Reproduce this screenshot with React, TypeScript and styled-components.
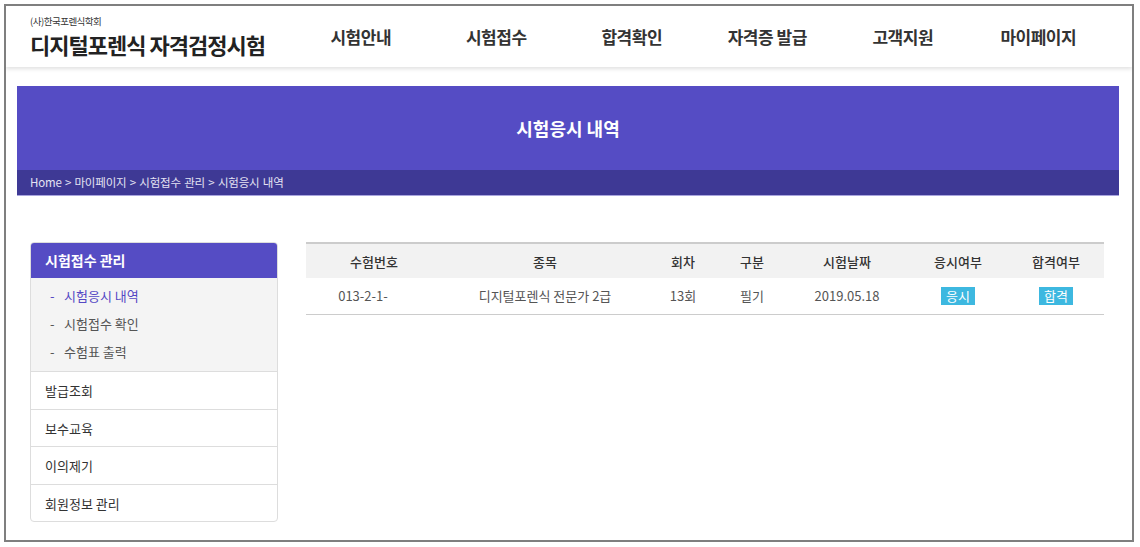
import React, { FC } from "react";
import styled, { createGlobalStyle } from "styled-components";

const GlobalStyle = createGlobalStyle`
  * { box-sizing: border-box; }
  body {
    margin: 0;
    background: #fff;
    font-family: "Noto Sans CJK KR", "Noto Sans", sans-serif;
    color: #333;
  }
`;

const Frame = styled.div`
  margin: 4px 0 0 4px;
  width: 1130px;
  height: 538px;
  border: 2px solid #7f7f7f;
  overflow: hidden;
`;

const Header = styled.header`
  display: flex;
  align-items: center;
  height: 61px;
  padding-left: 24px;
  box-shadow: 0 2px 4px rgba(0, 0, 0, 0.12);
  position: relative;
`;

const Logo = styled.div`
  display: flex;
  flex-direction: column;
  width: 263px;
  small {
    font-size: 9.5px;
    letter-spacing: -0.5px;
    color: #333;
    line-height: 14px;
  }
  strong {
    font-size: 22px;
    font-weight: 700;
    letter-spacing: -1px;
    line-height: 32px;
    color: #222;
  }
`;

const Nav = styled.nav`
  display: flex;
`;

const NavItem = styled.a`
  width: 135.5px;
  text-align: center;
  font-size: 17px;
  font-weight: 700;
  color: #333;
  letter-spacing: -0.5px;
  text-decoration: none;
`;

const Banner = styled.section`
  margin: 19px 13px 0 11px;
  background: #554cc4;
  border-bottom: 1px solid #a9a5de;
`;

const BannerTitle = styled.h1`
  margin: 0;
  height: 84px;
  display: flex;
  align-items: center;
  justify-content: center;
  color: #fff;
  font-size: 18px;
  font-weight: 700;
`;

const Breadcrumb = styled.div`
  height: 25px;
  background: #3e3995;
  color: #e4e3f3;
  font-size: 11.5px;
  letter-spacing: -0.2px;
  word-spacing: 1px;
  line-height: 25px;
  padding-left: 13px;
`;

const Body = styled.div`
  display: flex;
  gap: 28px;
  padding: 46px 0 0 24px;
  align-items: flex-start;
`;

const Sidebar = styled.aside`
  width: 248px;
  border: 1px solid #ddd;
  border-radius: 4px;
  overflow: hidden;
`;

const SideHead = styled.div`
  height: 36px;
  margin: -1px -1px 0;
  background: #554cc4;
  color: #fff;
  font-size: 14px;
  font-weight: 700;
  line-height: 36px;
  padding-left: 15px;
  border-radius: 4px 4px 0 0;
`;

const SubMenu = styled.ul`
  list-style: none;
  margin: 0;
  padding: 4px 0 5px;
  background: #f4f4f4;
`;

const SubItem = styled.li<{ $active?: boolean }>`
  height: 28px;
  line-height: 28px;
  padding-left: 19px;
  font-size: 13px;
  color: ${(p) => (p.$active ? "#5548c4" : "#555")};
  span {
    display: inline-block;
    width: 14px;
  }
`;

const SideItem = styled.div`
  height: 37.5px;
  line-height: 37px;
  border-top: 1px solid #ddd;
  padding-left: 14px;
  font-size: 13px;
  color: #333;
`;

const Table = styled.table`
  width: 798px;
  border-collapse: collapse;
  border-top: 2px solid #ccc;
  border-bottom: 1px solid #ccc;
  font-size: 13px;
`;

const Th = styled.th<{ $w: number }>`
  width: ${(p) => p.$w}px;
  height: 35px;
  padding: 0;
  background: #f2f2f2;
  font-weight: 500;
  color: #333;
  text-align: center;
`;

const Td = styled.td<{ $pr?: number }>`
  height: 36px;
  padding: 0 ${(p) => p.$pr ?? 0}px 0 0;
  text-align: center;
  color: #555;
`;

const Badge = styled.span`
  display: inline-block;
  background: #3db8e0;
  color: #fff;
  font-size: 13px;
  line-height: 18px;
  padding: 0 5px;
`;

const navItems = ["시험안내", "시험접수", "합격확인", "자격증 발급", "고객지원", "마이페이지"];
const cols: [string, number][] = [
  ["수험번호", 136],
  ["종목", 206],
  ["회차", 70],
  ["구분", 68],
  ["시험날짜", 122],
  ["응시여부", 100],
  ["합격여부", 96],
];

const App: FC = () => (
  <>
    <GlobalStyle />
    <Frame>
      <Header>
        <Logo>
          <small>(사)한국포렌식학회</small>
          <strong>디지털포렌식 자격검정시험</strong>
        </Logo>
        <Nav>
          {navItems.map((n) => (
            <NavItem key={n}>{n}</NavItem>
          ))}
        </Nav>
      </Header>
      <Banner>
        <BannerTitle>시험응시 내역</BannerTitle>
        <Breadcrumb>Home &gt; 마이페이지 &gt; 시험접수 관리 &gt; 시험응시 내역</Breadcrumb>
      </Banner>
      <Body>
        <Sidebar>
          <SideHead>시험접수 관리</SideHead>
          <SubMenu>
            <SubItem $active>
              <span>-</span>시험응시 내역
            </SubItem>
            <SubItem>
              <span>-</span>시험접수 확인
            </SubItem>
            <SubItem>
              <span>-</span>수험표 출력
            </SubItem>
          </SubMenu>
          <SideItem>발급조회</SideItem>
          <SideItem>보수교육</SideItem>
          <SideItem>이의제기</SideItem>
          <SideItem>회원정보 관리</SideItem>
        </Sidebar>
        <Table>
          <thead>
            <tr>
              {cols.map(([c, w]) => (
                <Th key={c} $w={w}>
                  {c}
                </Th>
              ))}
            </tr>
          </thead>
          <tbody>
            <tr>
              <Td $pr={22}>013-2-1-</Td>
              <Td>디지털포렌식 전문가 2급</Td>
              <Td>13회</Td>
              <Td>필기</Td>
              <Td>2019.05.18</Td>
              <Td>
                <Badge>응시</Badge>
              </Td>
              <Td>
                <Badge>합격</Badge>
              </Td>
            </tr>
          </tbody>
        </Table>
      </Body>
    </Frame>
  </>
);

export default App;
